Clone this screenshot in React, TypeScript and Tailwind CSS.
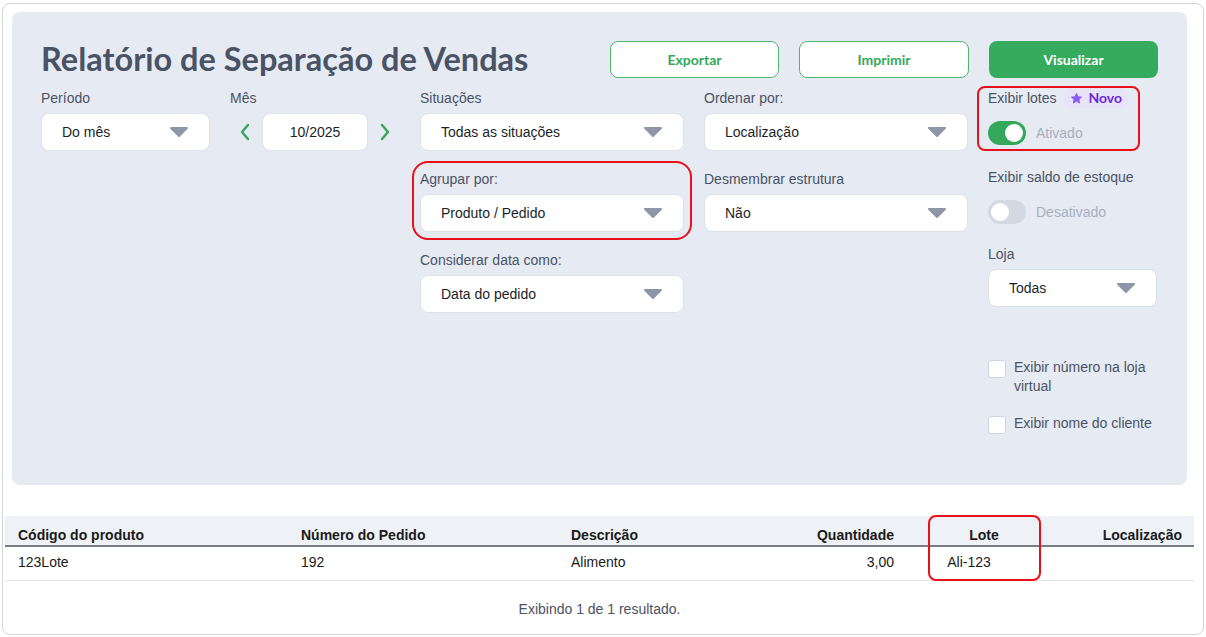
import { ReactNode } from "react";

const sans = "[font-family:Liberation_Sans,Arial,sans-serif]";
const round = "[font-family:Lato,Noto_Sans,sans-serif]";

const Arrow = () => (
  <svg width="20" height="12" viewBox="0 0 20 12">
    <path d="M2 2h16l-8 8z" fill="#8d97a8" stroke="#8d97a8" strokeWidth="2" strokeLinejoin="round" />
  </svg>
);

const Select = ({ value }: { value: string }) => (
  <div className="flex h-[38px] items-center justify-between rounded-lg border border-[#dde2ea] bg-white px-5 text-sm text-[#1a1f2b]">
    <span>{value}</span>
    <Arrow />
  </div>
);

const Field = ({ label, children }: { label: string; children: ReactNode }) => (
  <div className="flex flex-col">
    <label className="mb-[5px] h-5 text-sm leading-5 text-[#4a5365]">{label}</label>
    {children}
  </div>
);

const Toggle = ({ on, text }: { on: boolean; text: string }) => (
  <div className="flex items-center gap-[10px]">
    <div
      className={`flex h-6 w-[38px] items-center rounded-full px-[3px] ${
        on ? "justify-end bg-[#34a85a]" : "justify-start bg-[#d3d9e3]"
      }`}
    >
      <div className="h-[18px] w-[18px] rounded-full bg-white" />
    </div>
    <span className="text-sm text-[#a7b0c0]">{text}</span>
  </div>
);

const Check = ({ children }: { children: ReactNode }) => (
  <div className="flex items-start gap-2">
    <div className="mt-[2px] h-[18px] w-[18px] shrink-0 rounded-[3px] border border-[#cfd6e1] bg-white" />
    <span className="text-sm leading-[19px] text-[#4a5365]">{children}</span>
  </div>
);

const Chevron = ({ dir }: { dir: "l" | "r" }) => (
  <svg width="12" height="18" viewBox="0 0 12 18">
    <path
      d={dir === "l" ? "M9 2L3 9l6 7" : "M3 2l6 7-6 7"}
      fill="none"
      stroke="#34a85a"
      strokeWidth="2.4"
      strokeLinecap="round"
      strokeLinejoin="round"
    />
  </svg>
);

const Star = () => (
  <svg width="13" height="13" viewBox="0 0 24 24">
    <path
      d="M12 2.5l2.9 6.1 6.6.8-4.9 4.6 1.3 6.6L12 17.3l-5.9 3.3 1.3-6.6-4.9-4.6 6.6-.8z"
      fill="#8b5cf6"
      stroke="#8b5cf6"
      strokeWidth="1.5"
      strokeLinejoin="round"
    />
  </svg>
);

const rows = [
  { codigo: "123Lote", pedido: "192", descricao: "Alimento", qtd: "3,00", lote: "Ali-123", local: "" },
];

export default function App() {
  return (
    <div className={`min-h-screen bg-white pl-[2px] pt-[3px] ${sans}`}>
      <div className="h-[632px] w-[1202px] rounded-lg border border-[#d6d6d6] pt-2">
        {/* filtros */}
        <div className="ml-[9px] h-[473px] w-[1175px] rounded-lg bg-[#e6eaf2] pl-[29px] pt-[29px]">
          <div className="flex h-[37px] items-center justify-between pr-[29px]">
            <h1 className={`text-[32.5px] font-bold leading-none text-[#4a5365] ${round}`}>
              Relatório de Separação de Vendas
            </h1>
            <div className={`flex gap-5 text-sm font-bold ${round}`}>
              <button className="h-[37px] w-[169px] rounded-lg border border-[#4cb86e] bg-white text-[#34a85a]">
                Exportar
              </button>
              <button className="h-[37px] w-[170px] rounded-lg border border-[#4cb86e] bg-white text-[#34a85a]">
                Imprimir
              </button>
              <button className="h-[37px] w-[169px] rounded-lg bg-[#34ab5d] text-white">Visualizar</button>
            </div>
          </div>

          <div className="mt-[10px] flex gap-5">
            <div className="w-[169px]">
              <Field label="Período">
                <Select value="Do mês" />
              </Field>
            </div>

            <div className="w-[170px]">
              <Field label="Mês">
                <div className="flex items-center gap-[11px] pl-[9px]">
                  <Chevron dir="l" />
                  <div className="flex h-[38px] w-[106px] items-center justify-center rounded-lg border border-[#dde2ea] bg-white text-sm text-[#1a1f2b]">
                    10/2025
                  </div>
                  <Chevron dir="r" />
                </div>
              </Field>
            </div>

            <div className="flex w-[264px] flex-col gap-[18px]">
              <Field label="Situações">
                <Select value="Todas as situações" />
              </Field>
              <div className="rounded-lg outline-2 outline-offset-[6px] outline-[#e8101a]">
                <Field label="Agrupar por:">
                  <Select value="Produto / Pedido" />
                </Field>
              </div>
              <Field label="Considerar data como:">
                <Select value="Data do pedido" />
              </Field>
            </div>

            <div className="flex w-[264px] flex-col gap-[18px]">
              <Field label="Ordenar por:">
                <Select value="Localização" />
              </Field>
              <Field label="Desmembrar estrutura">
                <Select value="Não" />
              </Field>
            </div>

            <div className="flex w-[169px] flex-col">
              <div className="relative flex flex-col gap-[13px]">
                <span className="absolute -left-[11px] -top-[2px] h-[65px] w-[163px] rounded-lg border-2 border-[#e8101a]" />
                <div className="flex h-5 items-center gap-[8px]">
                  <span className="text-sm text-[#4a5365]">Exibir lotes</span>
                  <span
                    className={`flex h-[20px] items-center gap-[5px] rounded-md bg-[#e8e4f8] px-[6px] text-sm font-bold text-[#6d28d9] ${round}`}
                  >
                    <Star />
                    Novo
                  </span>
                </div>
                <Toggle on text="Ativado" />
              </div>

              <div className="mt-[22px] flex flex-col gap-[13px]">
                <span className="h-5 text-sm leading-5 text-[#4a5365]">Exibir saldo de estoque</span>
                <Toggle on={false} text="Desativado" />
              </div>

              <div className="mt-[20px]">
                <Field label="Loja">
                  <Select value="Todas" />
                </Field>
              </div>

              <div className="mt-[51px] flex flex-col gap-[18px]">
                <Check>
                  Exibir número na loja
                  <br />
                  virtual
                </Check>
                <Check>Exibir nome do cliente</Check>
              </div>
            </div>
          </div>
        </div>

        {/* resultado */}
        <div className="relative ml-[2px] mt-[31px] w-[1189px]">
          <span className="absolute left-[923px] top-[-1px] h-[66px] w-[113px] rounded-lg border-2 border-[#e8101a]" />
          <table className="w-full table-fixed border-collapse text-sm text-[#1a1a1a]">
            <thead>
              <tr className="h-[30px] border-b-2 border-[#777c85] bg-[#eef1f6] font-bold">
                <th className="w-[283px] pl-[13px] pt-[8px] text-left">Código do produto</th>
                <th className="w-[270px] pl-[13px] pt-[8px] text-left">Número do Pedido</th>
                <th className="w-[249px] pl-[13px] pt-[8px] text-left">Descrição</th>
                <th className="w-[100px] pr-[13px] pt-[8px] text-right">Quantidade</th>
                <th className="w-[154px] pt-[8px] text-center">Lote</th>
                <th className="pr-[12px] pt-[8px] text-right">Localização</th>
              </tr>
            </thead>
            <tbody>
              {rows.map((r) => (
                <tr key={r.codigo} className="h-[34px] border-b border-[#dfe4eb]">
                  <td className="pb-[2px] pl-[13px]">{r.codigo}</td>
                  <td className="pb-[2px] pl-[13px]">{r.pedido}</td>
                  <td className="pb-[2px] pl-[13px]">{r.descricao}</td>
                  <td className="pb-[2px] pr-[13px] text-right">{r.qtd}</td>
                  <td className="pb-[2px] pr-[30px] text-center">{r.lote}</td>
                  <td className="pb-[2px] pr-[12px] text-right">{r.local}</td>
                </tr>
              ))}
            </tbody>
          </table>
          <p className="mt-[18px] text-center text-sm text-[#4a5365]">Exibindo 1 de 1 resultado.</p>
        </div>
      </div>
    </div>
  );
}
